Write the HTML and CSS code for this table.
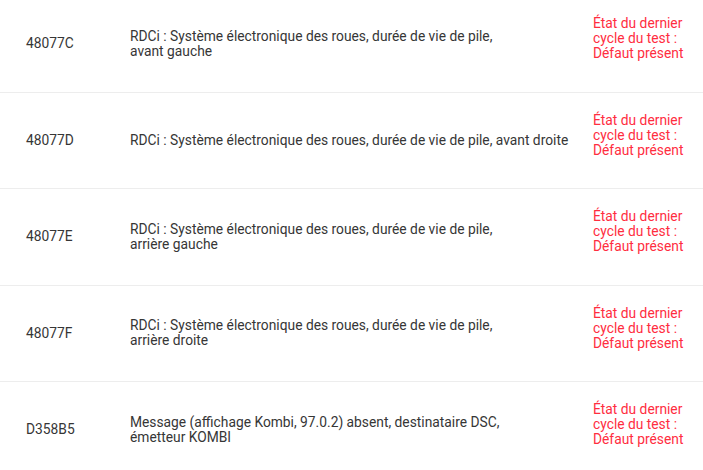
FILE: index.html
```html
<!DOCTYPE html>
<html lang="fr">
<head>
<meta charset="utf-8">
<link rel="stylesheet" href="styles.css">
</head>
<body>
<div class="list">
  <div class="row">
    <div class="code">48077C</div>
    <div class="desc">RDCi : Système électronique des roues, durée de vie de pile,<br>avant gauche</div>
    <div class="status">État du dernier cycle du test : Défaut présent</div>
  </div>
  <div class="row">
    <div class="code">48077D</div>
    <div class="desc">RDCi : Système électronique des roues, durée de vie de pile, avant droite</div>
    <div class="status">État du dernier cycle du test : Défaut présent</div>
  </div>
  <div class="row">
    <div class="code">48077E</div>
    <div class="desc">RDCi : Système électronique des roues, durée de vie de pile,<br>arrière gauche</div>
    <div class="status">État du dernier cycle du test : Défaut présent</div>
  </div>
  <div class="row">
    <div class="code">48077F</div>
    <div class="desc">RDCi : Système électronique des roues, durée de vie de pile,<br>arrière droite</div>
    <div class="status">État du dernier cycle du test : Défaut présent</div>
  </div>
  <div class="row">
    <div class="code">D358B5</div>
    <div class="desc">Message (affichage Kombi, 97.0.2) absent, destinataire DSC,<br>émetteur KOMBI</div>
    <div class="status">État du dernier cycle du test : Défaut présent</div>
  </div>
</div>
</body>
</html>
```
FILE: styles.css
```css
html, body {
  margin: 0;
  padding: 0;
  background: #fff;
}
body {
  font-family: Roboto, "Liberation Sans", sans-serif;
  font-size: 13.8px;
  line-height: 15px;
  color: #363636;
  overflow: hidden;
}
.list {
  margin-top: -4px;
}
.row {
  display: flex;
  align-items: center;
  height: 95.5px;
  border-bottom: 1px solid #ededed;
}
.code {
  width: 104px;
  padding-left: 26px;
  flex: none;
}
.desc {
  width: 446px;
  padding-right: 17px;
  flex: none;
}
.status {
  width: 96px;
  color: #ff2d3f;
  align-self: flex-start;
  padding-top: 20px;
  flex: none;
}
```
